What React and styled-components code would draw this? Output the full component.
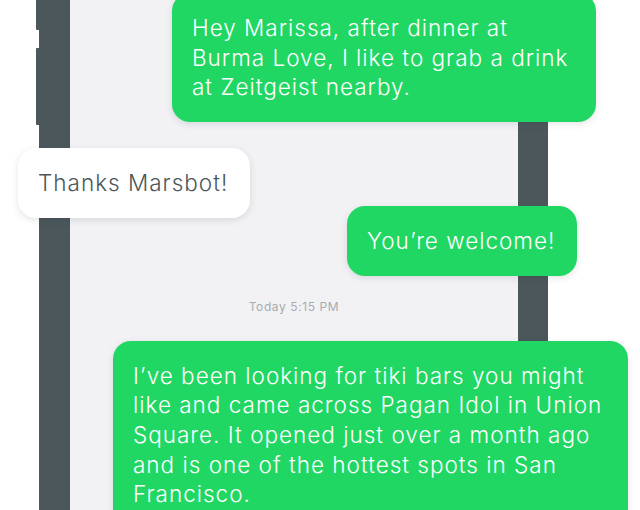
import React from 'react';
import styled, { createGlobalStyle } from 'styled-components';

const GlobalStyle = createGlobalStyle`
  html, body {
    margin: 0;
    padding: 0;
    background: #ffffff;
  }
  body {
    font-family: Inter, "Noto Sans", "Liberation Sans", sans-serif;
    -webkit-font-smoothing: antialiased;
  }
`;

const Stage = styled.div`
  width: 640px;
  height: 510px;
  overflow: hidden;
  background: #ffffff;
`;

const Phone = styled.div`
  position: relative;
  box-sizing: border-box;
  margin-left: 39px;
  width: 509px;
  min-height: 560px;
  background: #f2f2f5;
  border-left: 31px solid #4b575b;
  border-right: 30px solid #4b575b;

  /* side buttons */
  &::before,
  &::after {
    content: '';
    position: absolute;
    left: -34px;
    width: 4px;
    background: #4b575b;
    border-radius: 1px 0 0 1px;
  }
  &::before {
    top: -20px;
    height: 50px;
  }
  &::after {
    top: 48px;
    height: 77px;
  }
`;

const Thread = styled.div`
  display: flex;
  flex-direction: column;
  align-items: flex-start;
`;

const Bubble = styled.div`
  box-sizing: border-box;
  margin-left: ${p => p.$left}px;
  margin-top: ${p => p.$top}px;
  width: ${p => (p.$width ? `${p.$width}px` : 'auto')};
  padding: 20px 22px 20px 20px;
  border-radius: 18px;
  font-size: 22.5px;
  font-weight: 340;
  letter-spacing: 1px;
  line-height: 29.7px;
  color: ${p => (p.$mine ? '#ffffff' : '#4b575b')};
  background: ${p => (p.$mine ? '#21d764' : '#ffffff')};
  box-shadow: 0 2px 7px rgba(40, 50, 60, 0.13);
  white-space: ${p => (p.$width ? 'normal' : 'nowrap')};
`;

const Stamp = styled.div`
  align-self: stretch;
  margin-top: 23px;
  text-align: center;
  font-size: 12px;
  letter-spacing: 0.6px;
  line-height: 16px;
  color: #a8abaf;
`;

const messages = [
  { mine: true, left: 102, top: -7, width: 424, text: 'Hey Marissa, after dinner at Burma Love, I like to grab a drink at Zeitgeist nearby.' },
  { mine: false, left: -52, top: 26, text: 'Thanks Marsbot!' },
  { mine: true, left: 277, top: -12, text: 'You\u2019re welcome!' },
];

const App = () => (
  <Stage>
    <GlobalStyle />
    <Phone>
      <Thread>
        {messages.map((m, i) => (
          <Bubble key={i} $mine={m.mine} $left={m.left} $top={m.top} $width={m.width}>
            {m.text}
          </Bubble>
        ))}
        <Stamp>Today 5:15 PM</Stamp>
        <Bubble $mine $left={43} $top={26} $width={515}>
          I’ve been looking for tiki bars you might like and came across Pagan Idol in Union Square. It opened just over a month ago and is one of the hottest spots in San Francisco.
        </Bubble>
      </Thread>
    </Phone>
  </Stage>
);

export default App;
